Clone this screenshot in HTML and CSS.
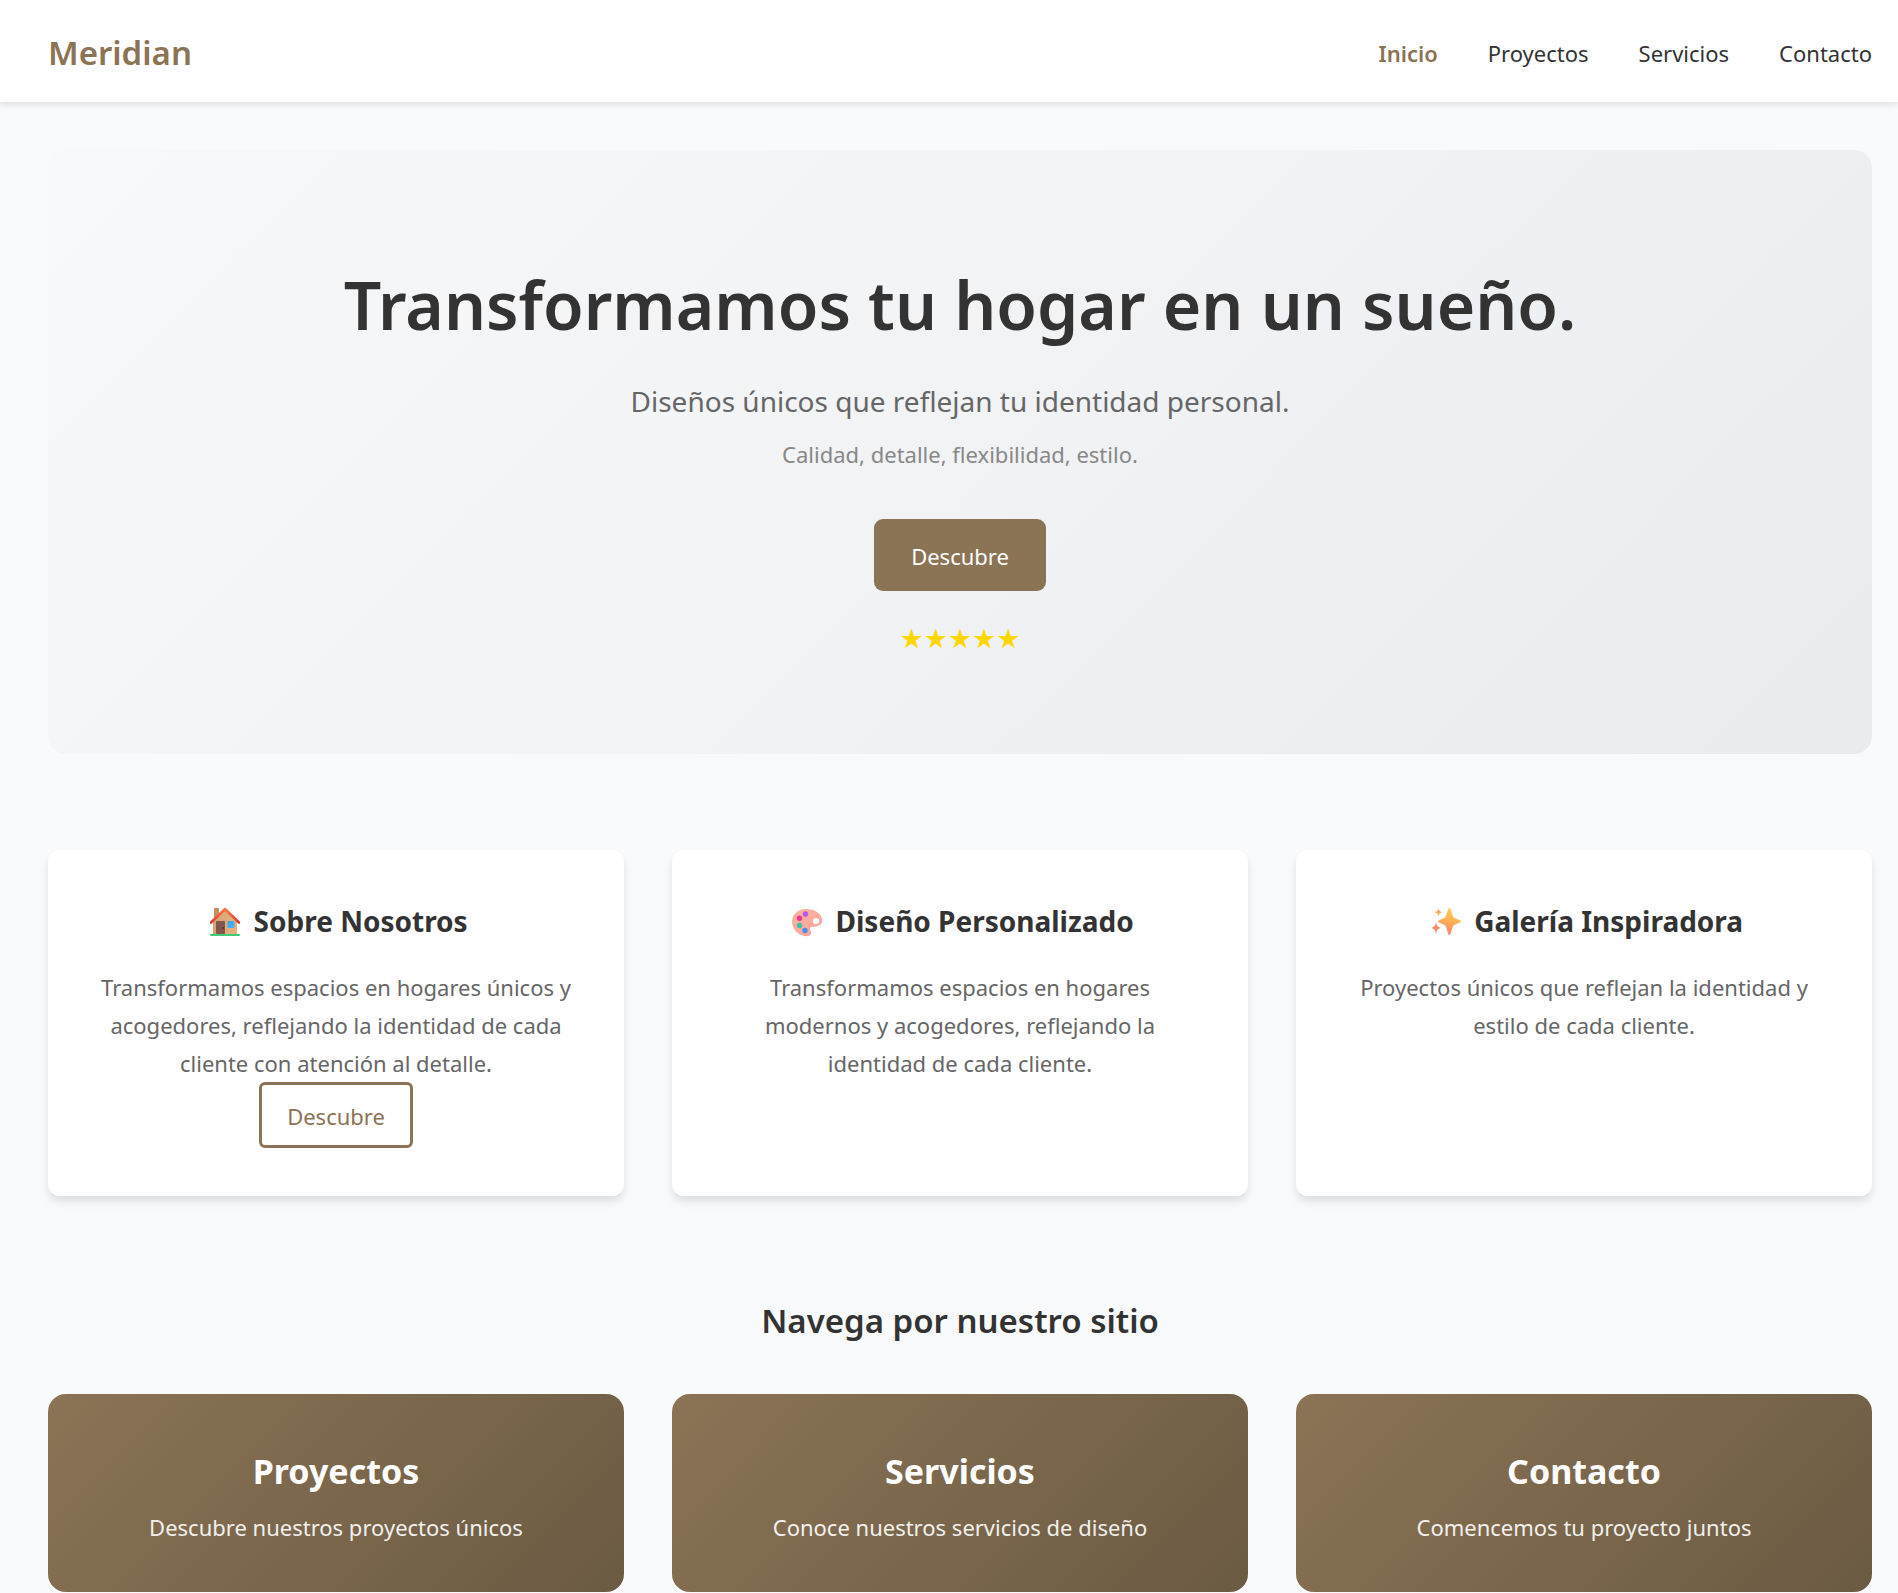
FILE: index.html
```
<!DOCTYPE html>
<html lang="es">
<head>
<meta charset="utf-8">
<meta name="viewport" content="width=device-width, initial-scale=1">
<title>Meridian</title>
<link rel="stylesheet" href="styles.css">
</head>
<body>
<header class="header">
  <div class="logo">Meridian</div>
  <nav class="nav">
    <a class="nav-link active" href="#inicio">Inicio</a>
    <a class="nav-link" href="#proyectos">Proyectos</a>
    <a class="nav-link" href="#servicios">Servicios</a>
    <a class="nav-link" href="#contacto">Contacto</a>
  </nav>
</header>

<main class="main">
  <section class="hero" id="inicio">
    <h1 class="hero-title">Transformamos tu hogar en un sueño.</h1>
    <p class="hero-lead">Diseños únicos que reflejan tu identidad personal.</p>
    <p class="hero-note">Calidad, detalle, flexibilidad, estilo.</p>
    <button class="btn btn-primary" type="button">Descubre</button>
    <div class="stars">★★★★★</div>
  </section>

  <section class="grid features">
    <article class="card">
      <h3 class="card-title">
        <svg class="icon" viewBox="0 0 30 30" aria-hidden="true">
          <defs>
            <linearGradient id="wall" x1="0" x2="1"><stop offset="0" stop-color="#d9a06f"/><stop offset="1" stop-color="#e8b282"/></linearGradient>
            <linearGradient id="roof" x1="0" y1="0" x2="0" y2="1"><stop offset="0" stop-color="#ff7a45"/><stop offset="1" stop-color="#d83a3a"/></linearGradient>
            <linearGradient id="pane" x1="0" y1="0" x2="1" y2="1"><stop offset="0" stop-color="#38a0ee"/><stop offset="1" stop-color="#46bdfb"/></linearGradient>
          </defs>
          <rect x="4" y="1" width="5" height="11" rx="1" fill="#c1915f"/>
          <path d="M3 14 15 3l12 11v14H3z" fill="url(#wall)"/>
          <rect x="6" y="14" width="9" height="13" rx="1" fill="#80584f"/>
          <circle cx="13" cy="21" r="1" fill="#4f3431"/>
          <rect x="17.500" y="14" width="7" height="7" rx="1" fill="url(#pane)"/>
          <path d="M1 15.500 15 2l14 13.500" fill="none" stroke="url(#roof)" stroke-width="2.600" stroke-linecap="round" stroke-linejoin="round"/>
          <rect x="0" y="27" width="30" height="2" rx="1" fill="#40cb78"/>
        </svg>
        Sobre Nosotros</h3>
      <p class="card-text">Transformamos espacios en hogares únicos y acogedores, reflejando la identidad de cada cliente con atención al detalle.</p>
      <button class="btn btn-outline" type="button">Descubre</button>
    </article>
    <article class="card">
      <h3 class="card-title">
        <svg class="icon" viewBox="0 0 30 30" aria-hidden="true">
          <defs><linearGradient id="wood" x1="0" y1="0" x2="1" y2="1"><stop offset="0" stop-color="#ffb49c"/><stop offset="1" stop-color="#f9a2a0"/></linearGradient></defs>
          <path fill="url(#wood)" fill-rule="evenodd" d="M14 2C6 2 0 7.500 0 14.500 0 22 6 28.500 14 29.300c3 .300 5-1 5-3.300 0-2-1-2.800-1-4.200 0-1.500 1.400-2 3-2 5 0 9.200-1.800 9.200-6.300C30.200 7 23 2 14 2zm10 9.300c2 0 3.300 1.200 3.300 2.900S25.800 17 24 17s-3.200-1.100-3.200-2.800 1.300-2.900 3.200-2.900z"/>
          <circle cx="13.500" cy="7" r="2.700" fill="#b65af0"/>
          <circle cx="7.500" cy="11.300" r="2.700" fill="#ee3a8e"/>
          <circle cx="7.500" cy="18.500" r="2.700" fill="#3fbfa8"/>
          <circle cx="13" cy="23.500" r="2.700" fill="#4a8eea"/>
        </svg>
        Diseño Personalizado</h3>
      <p class="card-text">Transformamos espacios en hogares modernos y acogedores, reflejando la identidad de cada cliente.</p>
    </article>
    <article class="card">
      <h3 class="card-title">
        <svg class="icon" viewBox="0 0 30 30" aria-hidden="true">
          <defs><linearGradient id="spark" x1=".6" y1="0" x2=".4" y2="1"><stop offset="0" stop-color="#ffce4a"/><stop offset=".5" stop-color="#ffb056"/><stop offset="1" stop-color="#ff7e72"/></linearGradient></defs>
          <path fill="url(#spark)" d="M17.200 2.200c.500-1.600 1.800-1.600 2.300 0l2.200 6.600c.500 1.300 1 1.900 2.300 2.400l4.800 2c1.500.600 1.500 1.900 0 2.400l-4.800 2c-1.300.500-1.800 1.100-2.300 2.400l-2.200 6.800c-.500 1.600-1.800 1.600-2.300 0L15 20c-.500-1.300-1-1.900-2.300-2.400l-4.600-2c-1.500-.500-1.500-1.800 0-2.400l4.600-2c1.300-.500 1.800-1.100 2.300-2.400z"/>
          <path fill="#efb155" d="M7.500 1c.600 2.800 1.200 3.400 4 4.200-2.800.800-3.400 1.400-4 4.300-.600-2.900-1.200-3.500-4-4.300 2.800-.800 3.400-1.400 4-4.200z"/>
          <path fill="#f98a70" d="M5 15.300c.800 3.800 1.500 4.500 5 5.600-3.500 1-4.200 1.800-5 6-.800-4.200-1.500-5-5-6 3.500-1.100 4.200-1.800 5-5.600z"/>
        </svg>
        Galería Inspiradora</h3>
      <p class="card-text">Proyectos únicos que reflejan la identidad y estilo de cada cliente.</p>
    </article>
  </section>

  <section>
    <h2 class="section-title">Navega por nuestro sitio</h2>
    <div class="grid">
      <a class="tile" id="proyectos" href="#proyectos">
        <h3 class="tile-title">Proyectos</h3>
        <p class="tile-text">Descubre nuestros proyectos únicos</p>
      </a>
      <a class="tile" id="servicios" href="#servicios">
        <h3 class="tile-title">Servicios</h3>
        <p class="tile-text">Conoce nuestros servicios de diseño</p>
      </a>
      <a class="tile" id="contacto" href="#contacto">
        <h3 class="tile-title">Contacto</h3>
        <p class="tile-text">Comencemos tu proyecto juntos</p>
      </a>
    </div>
  </section>
</main>
</body>
</html>
```
FILE: styles.css
```
* {
  box-sizing: border-box;
  margin: 0;
  padding: 0;
}

body {
  font-family: "Noto Sans", "Open Sans", sans-serif;
  font-size: 22px;
  line-height: 38px;
  color: #333;
  background: #f9fafc;
}

a {
  color: inherit;
  text-decoration: none;
}

/* Header */
.header {
  display: flex;
  align-items: center;
  justify-content: space-between;
  padding: 26px 26px 22px 48px;
  background: #fff;
  box-shadow: 0 3px 6px rgba(0, 0, 0, 0.1);
}

.logo {
  font-size: 33px;
  line-height: 54px;
  font-weight: 600;
  color: #8b7355;
}

.nav {
  display: flex;
  gap: 50px;
}

.nav-link.active {
  font-weight: 600;
  color: #8b7355;
}

.main {
  padding: 48px 26px 0 48px;
}

/* Hero */
.hero {
  padding: 96px 48px;
  text-align: center;
  border-radius: 18px;
  background: linear-gradient(135deg, #f8f9fa 0%, #e9ecef 100%);
}

.hero-title {
  margin-bottom: 16px;
  font-size: 66px;
  line-height: 116px;
  font-weight: 600;
}

.hero-lead {
  margin-bottom: 11px;
  font-size: 28px;
  line-height: 46px;
  color: #666;
}

.hero-note {
  margin-bottom: 46px;
  color: #888;
}

.btn {
  display: block;
  margin: 0 auto;
  font: inherit;
  cursor: pointer;
}

.btn-primary {
  padding: 18px 37px 16px;
  border: 0;
  border-radius: 9px;
  color: #fff;
  background: #8b7355;
}

.stars {
  margin-top: 28px;
  font-family: "DejaVu Sans", sans-serif;
  font-size: 27px;
  line-height: 39px;
  color: #ffd700;
}

/* Cards */
.grid {
  display: grid;
  grid-template-columns: repeat(3, 1fr);
  gap: 48px;
}

.features {
  margin: 96px 0;
}

.card {
  padding: 48px;
  text-align: center;
  border-radius: 12px;
  background: #fff;
  box-shadow: 0 6px 9px rgba(0, 0, 0, 0.1);
}

.card-title {
  margin-bottom: 24px;
  font-size: 28px;
  line-height: 46px;
  font-weight: 700;
}

.icon {
  width: 30px;
  height: 30px;
  margin: 0 6px;
  vertical-align: -5px;
}

.card-text {
  color: #666;
}

.btn-outline {
  padding: 12px 25px 10px;
  border: 3px solid #8b7355;
  border-radius: 6px;
  color: #8b7355;
  background: transparent;
}

/* Site links */
.section-title {
  margin-bottom: 44px;
  font-size: 33px;
  line-height: 58px;
  font-weight: 600;
  text-align: center;
}

.tile {
  padding: 48px 48px 46px;
  text-align: center;
  border-radius: 18px;
  color: #fff;
  background: linear-gradient(135deg, #8b7355 0%, #6b5b43 100%);
}

.tile-title {
  margin-bottom: 8px;
  font-size: 34px;
  line-height: 58px;
  font-weight: 700;
}

.tile-text {
  opacity: 0.9;
}
```
